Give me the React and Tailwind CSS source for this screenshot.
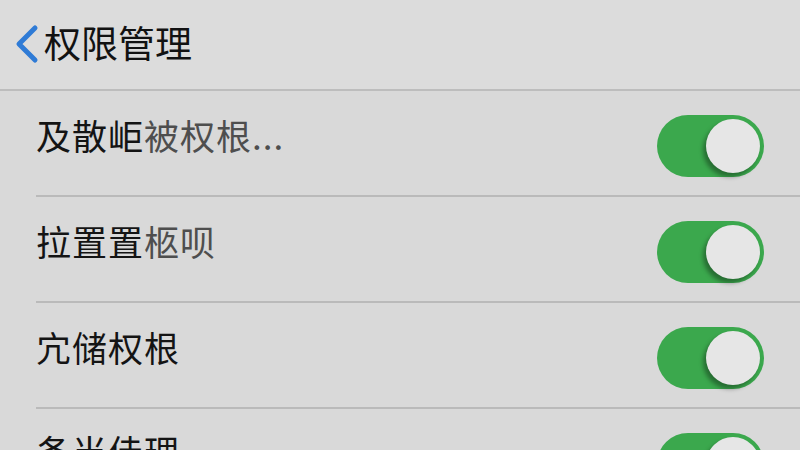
const font = { fontFamily: '"Noto Sans CJK SC", "Noto Sans", sans-serif' };

const Toggle = () => (
  <div className="relative w-[107px] h-[62px] rounded-full bg-[#3ba84d] shrink-0">
    <div className="absolute right-[4px] top-[4px] w-[54px] h-[54px] rounded-full bg-[#e6e6e6] shadow-[-3px_4px_4px_rgba(0,0,0,0.35)]" />
  </div>
);

const rows = [
  { dark: '及散岠', grey: '被权根...' },
  { dark: '拉置置', grey: '柩呗' },
  { dark: '宂储权根', grey: '' },
];

export default function App() {
  return (
    <div className="w-[800px] h-[450px] overflow-hidden bg-[#d9d9d9]" style={font}>
      <div className="h-[91px] bg-[#dcdcdc] border-b-2 border-[#bdbdbd] flex items-center pl-[14px]">
        <svg width="26" height="40" viewBox="0 0 26 40" className="mt-[-2px]">
          <path d="M21 4 L5 20 L21 36" fill="none" stroke="#2f7bd6" strokeWidth="5" strokeLinecap="round" strokeLinejoin="round" />
        </svg>
        <span className="ml-[4px] text-[37px] leading-none text-[#121212] mt-[-4px]">权限管理</span>
      </div>
      {rows.map((r, i) => (
        <div key={i} className="pl-[36px]">
          <div className="h-[106px] border-b-2 border-[#bababa] flex items-center justify-between pr-[36px]">
            <span className="text-[35px] leading-none mb-[18px] tracking-[1px]">
              <span className="text-[#141414]">{r.dark}</span>
              <span className="text-[#4e4e4e]">{r.grey}</span>
            </span>
            <div className="mt-[6px]">
              <Toggle />
            </div>
          </div>
        </div>
      ))}
      <div className="pl-[36px]">
        <div className="h-[106px] flex items-start justify-between pr-[36px] pt-[24px]">
          <span className="text-[35px] leading-none text-[#141414] tracking-[1px]">备当佳理</span>
          <Toggle />
        </div>
      </div>
    </div>
  );
}
